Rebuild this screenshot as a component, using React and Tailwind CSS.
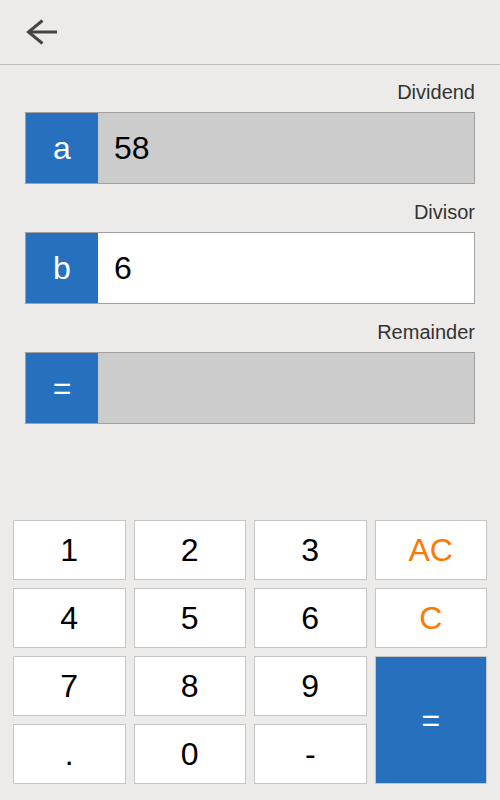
import { useState } from 'react';
import clsx from 'clsx';

const KEYS = ['1', '2', '3', 'AC', '4', '5', '6', 'C', '7', '8', '9', '=', '.', '0', '-'];

const FIELDS = [
  { id: 'dividend', label: 'Dividend', symbol: 'a' },
  { id: 'divisor', label: 'Divisor', symbol: 'b' },
  { id: 'remainder', label: 'Remainder', symbol: '=' },
];

function BackIcon() {
  return (
    <svg
      width="32"
      height="26"
      viewBox="0 0 32 26"
      fill="none"
      stroke="#444444"
      strokeWidth="3"
      aria-hidden="true"
    >
      <path d="M31 13H3" />
      <path d="M16.5 1.5L2.5 13L16.5 24.5" />
    </svg>
  );
}

function Field({ id, label, symbol, value, active, onFocus }) {
  return (
    <div className="flex flex-col">
      <label htmlFor={id} className="h-6 text-right text-[20px] leading-6 text-[#333333]">
        {label}
      </label>
      <div
        className={clsx(
          'mt-2 flex h-18 border border-[#a0a0a0]',
          active ? 'bg-white' : 'bg-[#cccccc]'
        )}
      >
        <span className="flex w-18 shrink-0 items-center justify-center bg-[#2670bd] text-[32px] text-white">
          {symbol}
        </span>
        <input
          id={id}
          type="text"
          readOnly
          value={value}
          onFocus={onFocus}
          className="min-w-0 flex-1 bg-transparent px-4 text-[32px] text-black outline-none"
        />
      </div>
    </div>
  );
}

export default function App() {
  const [values, setValues] = useState({ dividend: '58', divisor: '6', remainder: '' });
  const [active, setActive] = useState('divisor');

  const handleKey = (key) => {
    if (key === 'AC') {
      setValues({ dividend: '', divisor: '', remainder: '' });
      setActive('dividend');
    } else if (key === 'C') {
      setValues({ ...values, [active]: values[active].slice(0, -1) });
    } else if (key === '=') {
      const result = Number(values.dividend) % Number(values.divisor);
      setValues({ ...values, remainder: Number.isNaN(result) ? '' : String(result) });
    } else {
      setValues({ ...values, [active]: values[active] + key });
    }
  };

  return (
    <div className="flex min-h-screen flex-col bg-[#ecebe9] font-['Liberation_Sans',Arial,sans-serif]">
      {/* Header */}
      <header className="flex h-[65px] items-center border-b border-[#bcbcbc] px-[26px]">
        <button type="button" aria-label="Back" className="cursor-pointer">
          <BackIcon />
        </button>
      </header>

      {/* Values */}
      <main className="flex flex-col gap-4 px-[25px] pt-[15px] pb-8">
        {FIELDS.map((field) => (
          <Field
            key={field.id}
            {...field}
            value={values[field.id]}
            active={active === field.id}
            onFocus={() => field.id !== 'remainder' && setActive(field.id)}
          />
        ))}
      </main>

      {/* Keypad */}
      <div className="mt-auto grid auto-rows-[60px] grid-cols-4 gap-2 px-[13px] pb-4">
        {KEYS.map((key) => (
          <button
            key={key}
            type="button"
            onClick={() => handleKey(key)}
            className={clsx(
              'cursor-pointer border border-[#c6c6c6] text-[32px]',
              key === '=' && 'row-span-2 bg-[#2670bd] text-white',
              (key === 'AC' || key === 'C') && 'bg-white text-[#ff7800]',
              !['=', 'AC', 'C'].includes(key) && 'bg-white text-black'
            )}
          >
            {key}
          </button>
        ))}
      </div>
    </div>
  );
}
